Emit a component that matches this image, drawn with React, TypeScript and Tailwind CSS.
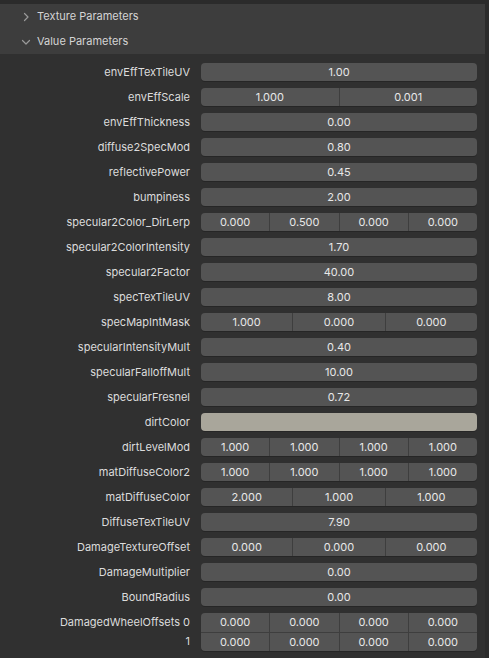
import { type ReactNode } from 'react';

type Row =
  | { label: string; values: string[] }
  | { label: string; color: string };

const rows: Row[] = [
  { label: 'envEffTexTileUV', values: ['1.00'] },
  { label: 'envEffScale', values: ['1.000', '0.001'] },
  { label: 'envEffThickness', values: ['0.00'] },
  { label: 'diffuse2SpecMod', values: ['0.80'] },
  { label: 'reflectivePower', values: ['0.45'] },
  { label: 'bumpiness', values: ['2.00'] },
  { label: 'specular2Color_DirLerp', values: ['0.000', '0.500', '0.000', '0.000'] },
  { label: 'specular2ColorIntensity', values: ['1.70'] },
  { label: 'specular2Factor', values: ['40.00'] },
  { label: 'specTexTileUV', values: ['8.00'] },
  { label: 'specMapIntMask', values: ['1.000', '0.000', '0.000'] },
  { label: 'specularIntensityMult', values: ['0.40'] },
  { label: 'specularFalloffMult', values: ['10.00'] },
  { label: 'specularFresnel', values: ['0.72'] },
  { label: 'dirtColor', color: '#a9a69b' },
  { label: 'dirtLevelMod', values: ['1.000', '1.000', '1.000', '1.000'] },
  { label: 'matDiffuseColor2', values: ['1.000', '1.000', '1.000', '1.000'] },
  { label: 'matDiffuseColor', values: ['2.000', '1.000', '1.000'] },
  { label: 'DiffuseTexTileUV', values: ['7.90'] },
  { label: 'DamageTextureOffset', values: ['0.000', '0.000', '0.000'] },
  { label: 'DamageMultiplier', values: ['0.00'] },
  { label: 'BoundRadius', values: ['0.00'] },
];

function Chevron({ open }: { open?: boolean }) {
  return (
    <svg width="10" height="10" viewBox="0 0 10 10" className="shrink-0">
      <path
        d={open ? 'M1.5 3.5 L5 7 L8.5 3.5' : 'M3.5 1.5 L7 5 L3.5 8.5'}
        fill="none"
        stroke="#9a9a9a"
        strokeWidth="1.2"
        strokeLinecap="round"
        strokeLinejoin="round"
      />
    </svg>
  );
}

function PanelHeader({ title, open }: { title: string; open?: boolean }) {
  return (
    <div className="flex h-[25px] items-center gap-[6px] pl-[21px] text-[11px] text-[#d4d4d4]">
      <Chevron open={open} />
      <span>{title}</span>
    </div>
  );
}

// One row of number slots; segments share a rounded box split by thin lines
function NumberSlots({ values, className = '' }: { values: string[]; className?: string }) {
  return (
    <div className={`flex h-full w-full ${className}`}>
      {values.map((v, i) => (
        <div
          key={i}
          className={`flex flex-1 items-center justify-center ${i > 0 ? 'border-l border-[#3e3e3e]' : ''}`}
        >
          {v}
        </div>
      ))}
    </div>
  );
}

function Field({ children, bg = 'bg-[#545454]' }: { children?: ReactNode; bg?: string }) {
  return (
    <div className={`h-[18px] w-[276px] overflow-hidden rounded-[4px] ${bg} shadow-[0_1px_0_#262626] text-[11px] text-[#e8e8e8]`}>
      {children}
    </div>
  );
}

function PropRow({ row }: { row: Row }) {
  return (
    <div className="flex h-[18px] items-center">
      <div className="w-[190px] text-right text-[11px] text-[#dcdcdc]">{row.label}</div>
      <div className="ml-[11px]">
        {'color' in row ? (
          <Field bg="bg-[#a9a69b]" />
        ) : (
          <Field>
            <NumberSlots values={row.values} />
          </Field>
        )}
      </div>
    </div>
  );
}

export default function App() {
  const wheel = [
    ['0.000', '0.000', '0.000', '0.000'],
    ['0.000', '0.000', '0.000', '0.000'],
  ];

  return (
    <div
      className="flex h-[658px] w-[489px] bg-[#2b2b2b] overflow-hidden"
      style={{ fontFamily: 'Inter, "DejaVu Sans", sans-serif' }}
    >
      <div className="flex w-[485px] flex-col">
        <div className="h-[4px] bg-[#2b2b2b]" />
        <div className="bg-[#3d3d3d]">
          <PanelHeader title="Texture Parameters" />
          <PanelHeader title="Value Parameters" open />
        </div>
        <div className="flex flex-1 flex-col gap-[7px] bg-[#303030] pt-[9px]">
          {rows.map((r) => (
            <PropRow key={r.label} row={r} />
          ))}
          <div className="flex">
            <div className="w-[190px] text-right text-[11px] text-[#dcdcdc]">
              <div className="flex h-[19px] items-center justify-end">DamagedWheelOffsets 0</div>
              <div className="flex h-[19px] items-center justify-end">1</div>
            </div>
            <div className="ml-[11px] w-[276px] overflow-hidden rounded-[4px] bg-[#545454] shadow-[0_1px_0_#262626] text-[11px] text-[#e8e8e8]">
              {wheel.map((vals, i) => (
                <div key={i} className={`h-[19px] ${i > 0 ? 'border-t border-[#3e3e3e]' : ''}`}>
                  <NumberSlots values={vals} />
                </div>
              ))}
            </div>
          </div>
        </div>
      </div>
      <div className="w-[4px] bg-[#2b2b2b]" />
    </div>
  );
}
